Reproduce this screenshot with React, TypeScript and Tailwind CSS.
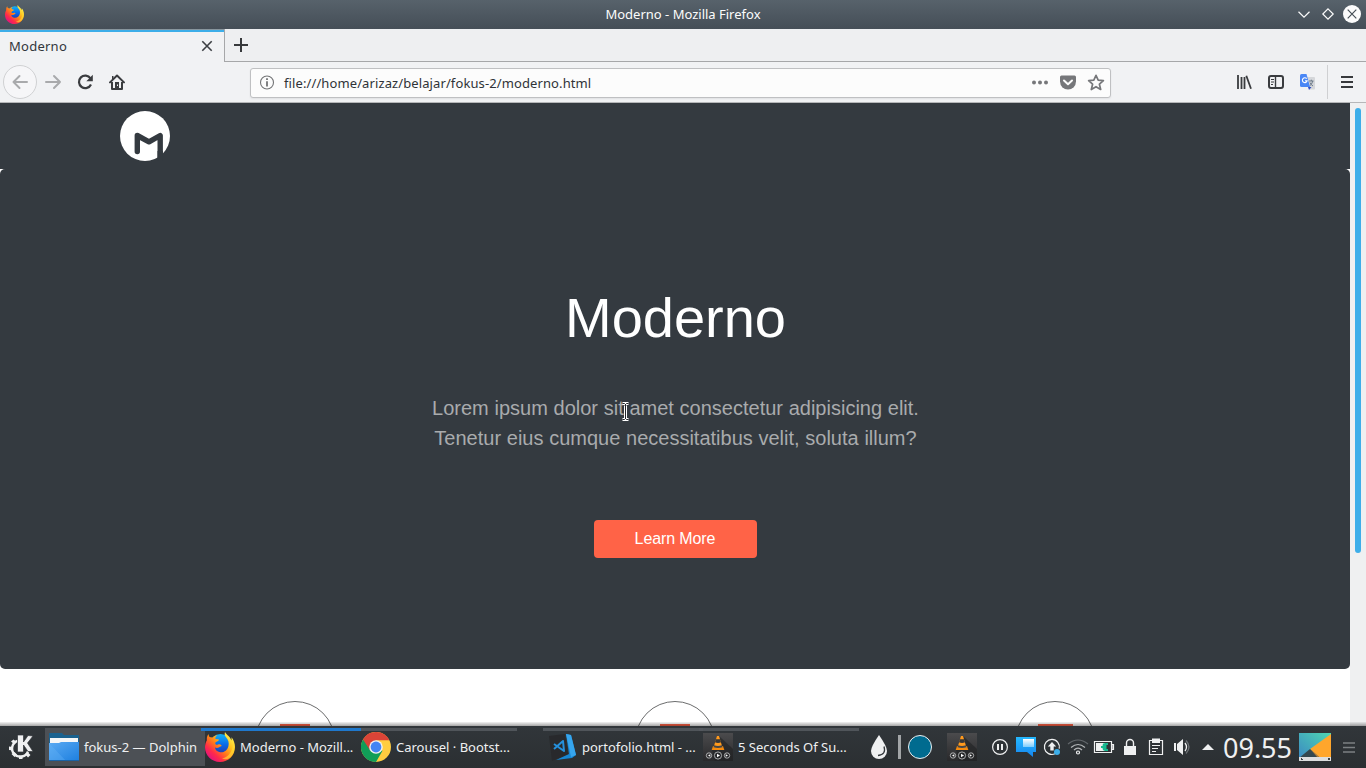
import React from "react";

const ui = "font-['Noto_Sans',sans-serif]";

function FirefoxLogo({ size, id }: { size: number; id: string }) {
  return (
    <svg width={size} height={size} viewBox="0 0 30 30" className="shrink-0">
      <defs>
        <linearGradient id={id + "a"} x1="0.85" y1="0.1" x2="0.15" y2="0.85">
          <stop offset="0" stopColor="#fff44f" />
          <stop offset="0.3" stopColor="#ffc01e" />
          <stop offset="0.55" stopColor="#ff7a1a" />
          <stop offset="0.8" stopColor="#ff2a4a" />
          <stop offset="1" stopColor="#e6157a" />
        </linearGradient>
        <linearGradient id={id + "b"} x1="0.5" y1="0" x2="0.5" y2="1">
          <stop offset="0" stopColor="#12b4f5" />
          <stop offset="0.5" stopColor="#0a6be8" />
          <stop offset="1" stopColor="#2431a8" />
        </linearGradient>
      </defs>
      <circle cx="15.500" cy="12.500" r="10.500" fill={"url(#" + id + "b)"} />
      <path
        d="M20 0c-.6 2-.4 3.600 1 5.300 2.300 2.400 3.300 5.600 2.400 8.900-1 4-4.400 6.500-8.200 6-3.300-.4-5.200-2.600-5.200-4.600 1.700.6 3.200.4 4.500-.7.8-.6 1.700-.3 2-.9.300-.6-.6-1.700-2.200-1.700-1.500 0-2 1-3.500.2-.6-.6-.6-1.300-.4-1.900.4-.7 2.900-1.600 3.200-2 .2-.4.200-.9.100-1.400-2 .1-3-.3-3.500-.8.300-1.500 1-2.400 2.100-3.200-2.200.2-3.800 1.200-4.800 2.300-1.200-.2-2.200-.2-3-.6C3.800 3.800 3.700 2.800 3.500 2 1.700 4.200 1.700 6.700 1.900 8.300.8 10.300 0 12.800 0 15.300 0 23.500 6.600 30 15 30s15-6.600 15-15c0-3.800-1.400-7.200-3.500-9.800.1 1.300.1 2.300-.1 3.200C25.400 4.800 22 3.400 20 0z"
        fill={"url(#" + id + "a)"}
      />
      <path d="M27.500 9c1.500 7-2 15.500-10.500 17.500C25 30 31 21 29 12z" fill="#ffdf36" opacity="0.6" />
    </svg>
  );
}

function VlcIcon({ id }: { id: string }) {
  return (
    <svg width="30" height="28" viewBox="0 0 30 28" className="shrink-0">
      <defs>
        <linearGradient id={id} x1="0" y1="0" x2="0" y2="1">
          <stop offset="0" stopColor="#4b4b4d" />
          <stop offset="1" stopColor="#29292b" />
        </linearGradient>
      </defs>
      <rect width="30" height="28" fill={"url(#" + id + ")"} />
      <path d="M16 3 30 16v12H12l-3-11z" fill="#202123" opacity="0.6" />
      <path d="M10 13h10l1.300 4H8.700z" fill="#f58a0d" />
      <path d="M14 3h2l3.500 11.500q-4.500 1.500-9 0z" fill="#ff9a1e" />
      <path d="M13 6.300h4l1 3q-3 1.200-6 0z" fill="#353638" />
      <path d="M11 12.200q4 1.600 8 0l.6 2q-4.600 1.500-9.200 0z" fill="#454546" />
      <g fill="none" stroke="#c9cacb" strokeWidth="0.8">
        <circle cx="6" cy="22.500" r="2.700" />
        <circle cx="15" cy="22.500" r="3.600" />
        <circle cx="24" cy="22.500" r="2.700" />
      </g>
      <path d="m14 20.700 3 1.800-3 1.800zM7.300 21.200v2.600L5 22.500zM22.700 21.200v2.600l2.300-1.300z" fill="#fff" />
    </svg>
  );
}

function WindowBar() {
  return (
    <div className="relative flex h-[29px] shrink-0 items-center justify-center bg-linear-to-b from-[#57626b] to-[#454e57]">
      <div className="absolute left-[5px] top-[5px]">
        <FirefoxLogo size={19} id="fxTitle" />
      </div>
      <span className="pb-[2px] text-[13px] leading-[18px] text-[#fcfcfc]">Moderno - Mozilla Firefox</span>
      <svg className="absolute right-0 top-0" width="72" height="29" viewBox="0 0 72 29" fill="none" stroke="#fcfcfc" strokeWidth="1.200">
        <path d="m4.500 11.800 5.500 5.400 5.500-5.400M34 8.800l5.200 5.200-5.200 5.200-5.200-5.200z" />
        <circle cx="58" cy="14" r="9" fill="#fcfcfc" stroke="none" />
        <path d="m53.700 9.700 8.600 8.600m0-8.600-8.600 8.600" stroke="#475057" />
      </svg>
    </div>
  );
}

function TabStrip() {
  return (
    <div className="flex h-[33px] shrink-0 bg-[#eeeff1]">
      <div className="flex h-[33px] w-[225px] items-center justify-between border-r border-[#a6a7a9] bg-[#f1f2f4] pl-[9px] pr-[11px] shadow-[inset_0_1px_0_#88959d,inset_0_3px_0_#3daee9]">
        <span className="pt-px text-[13px] leading-[18px] tracking-[0.25px] text-[#31363b]">Moderno</span>
        <svg width="12" height="12" viewBox="0 0 12 12" stroke="#3c3f43" strokeWidth="1.600" className="mt-px">
          <path d="m1.300 1.300 9.400 9.400m0-9.400-9.400 9.400" />
        </svg>
      </div>
      <div className="flex-1 border-b border-[#a6a7a9] pl-[8px] pt-[8px]">
        <svg width="16" height="16" viewBox="0 0 16 16" stroke="#37393c" strokeWidth="2">
          <path d="M8 1v14M1 8h14" />
        </svg>
      </div>
    </div>
  );
}

function Toolbar() {
  return (
    <div className="flex h-[41px] shrink-0 items-center border-b border-[#b6b7b9] bg-[#f1f2f4]">
      <svg width="250" height="40" viewBox="0 0 250 40" fill="none" className="shrink-0">
        <circle cx="20" cy="20" r="16.500" fill="#f6f6f8" stroke="#d0d1d3" />
        <g stroke="#a9aaac" strokeWidth="2" strokeLinecap="round" strokeLinejoin="round">
          <path d="M27 20H13.500m6-6-6 6 6 6" />
          <path d="M46 20h14m-6-6 6 6-6 6" />
        </g>
        <path d="M90.500 16.300A6.300 6.300 0 1 0 91 22.500" stroke="#3a3c3f" strokeWidth="2.200" />
        <path d="M92.800 12.800v6.400h-6.500z" fill="#3a3c3f" />
        <path d="m110 20.400 7-6.900 7 6.900" stroke="#3a3c3f" strokeWidth="2" strokeLinecap="round" strokeLinejoin="round" />
        <path d="M112 20v7h10v-7" stroke="#3a3c3f" strokeWidth="2" strokeLinejoin="round" />
        <path d="M115 20h4v7h-4z" fill="#3a3c3f" />
        <path d="M117 22.500h1v1.500h-1z" fill="#f1f2f4" />
        <path d="M112 14h1.500v3H112z" fill="#3a3c3f" />
      </svg>
      <div className="mt-px flex h-[30px] w-[861px] shrink-0 items-center rounded-[3px] border border-[#bfc0c2] bg-[#fcfcfc] shadow-[0_1px_2px_rgba(0,0,0,0.07)]">
        <svg width="33" height="28" viewBox="0 0 33 28" fill="none" className="shrink-0">
          <circle cx="16" cy="13.500" r="6.500" stroke="#737476" strokeWidth="1.100" />
          <path d="M16 12.200V17.500M16 9.300v1.800" stroke="#606163" strokeWidth="1.600" />
        </svg>
        <span className="flex-1 pt-[1px] text-[13px] leading-[18px] tracking-[0.105px] text-[#2f3337]">file:///home/arizaz/belajar/fokus-2/moderno.html</span>
        <svg width="80" height="28" viewBox="0 0 80 28" className="shrink-0" fill="#76777a">
          <circle cx="4" cy="13.500" r="2" />
          <circle cx="10" cy="13.500" r="2" />
          <circle cx="16" cy="13.500" r="2" />
          <path d="M25.500 0" />
          <path d="M31.500 6.500h13q1.500 0 1.500 1.500v4.500a8 8 0 0 1-16 0V8q0-1.500 1.500-1.500z" />
          <path d="m34 11.500 4 3.800 4-3.800" fill="none" stroke="#fcfcfc" strokeWidth="2" strokeLinecap="round" strokeLinejoin="round" />
          <path d="m66 6.300 2.200 4.900 5.200.5-4 3.500 1.300 5.300-4.700-2.800-4.700 2.800 1.300-5.300-4-3.500 5.200-.5z" fill="none" stroke="#76777a" strokeWidth="1.700" strokeLinejoin="round" />
        </svg>
      </div>
      <svg width="255" height="40" viewBox="1111 62 255 40" fill="none" className="shrink-0">
        <g stroke="#3a3c3f" strokeWidth="2">
          <path d="M1238 75v14M1241.500 77v12M1244.500 77v12M1246.300 75.700l4.700 13" strokeWidth="1.800" />
          <rect x="1269" y="76" width="14" height="12" rx="2" />
          <path d="M1275.500 76v12" strokeWidth="1.400" />
          <path d="M1271 79.500h3M1271 82h3M1271 84.500h2" strokeWidth="1" />
        </g>
        <path d="M1306 77h8q1 0 1 1v10.500q0 1-1 1h-5z" fill="#d5d7da" />
        <path d="M1301.500 74h5l3.500 13h-8.500q-1.500 0-1.500-1.500v-10q0-1.500 1.500-1.500z" fill="#4a87f5" />
        <path d="M1308 87h3.500l-2.500 3z" fill="#2f50c8" />
        <path d="M1306.700 78.700a2.400 2.400 0 1 0 .4 2.200h-2" stroke="#fff" strokeWidth="1.100" />
        <path d="M1309 81h4.500M1311.300 79.700v1.300M1312.800 81q-1 3.600-3 4.700M1310 82.500q1 2.500 3 3.500" stroke="#6c7a89" />
        <path d="M1327.500 65v34" stroke="#cfd0d2" />
        <path d="M1341 77h12M1341 82h12M1341 87h12" stroke="#37393c" strokeWidth="2" />
      </svg>
    </div>
  );
}

function PageHeader() {
  return (
    <header className="h-[66px] bg-[#343a40] pl-[120px] pt-[8px]">
      <svg width="50" height="50" viewBox="0 0 50 50">
        <circle cx="25" cy="25" r="25" fill="#fff" />
        <path d="M17.300 40.500V24.500L29 30.800l11.200-6.300V48" fill="none" stroke="#343a40" strokeWidth="5.400" strokeLinecap="round" strokeLinejoin="round" />
        <path d="M37.500 40h5.400v8h-5.400z" fill="#343a40" />
      </svg>
    </header>
  );
}

function Hero() {
  return (
    <section className="relative flex h-[500px] flex-col items-center rounded-[5px] bg-[#343a40] pt-[115px]">
      <h1 className="pl-[1px] text-[56px] leading-[67px] text-white">Moderno</h1>
      <p className="mt-[42px] pl-[1px] text-center text-[20px] leading-[30px] text-[#a9abad] [word-spacing:0.15px]">
        Lorem ipsum dolor sit amet consectetur adipisicing elit.
        <br />
        Tenetur eius cumque necessitatibus velit, soluta illum?
      </p>
      <button className="mt-[67px] h-[38px] w-[163px] rounded-[4px] bg-[#ff6347] text-[16px] leading-[24px] tracking-[-0.1px] text-white">Learn More</button>
      <svg className="absolute left-[620px] top-[232px]" width="12" height="21" viewBox="0 0 12 21" fill="none">
        <path d="M2.500 2.500h2l1 1 1-1h2M5.500 3v15M2.500 18.500h2l1-1 1 1h2" stroke="#fff" strokeWidth="3" />
        <path d="M2.500 2.500h2l1 1 1-1h2M5.500 3v15M2.500 18.500h2l1-1 1 1h2" stroke="#222528" strokeWidth="1" />
      </svg>
    </section>
  );
}

function Features() {
  return (
    <section className="flex h-[57px] justify-center gap-[300px] overflow-hidden pt-[32px]">
      {["w-[30px]", "w-[30px]", "w-[35px]"].map((width, i) => (
        <div key={i} className="flex h-[80px] w-[80px] shrink-0 justify-center rounded-full border border-[#6c6d6e] pt-[22px]">
          <div className={width + " h-[20px] bg-[#ff6347]"} />
        </div>
      ))}
    </section>
  );
}

function Task({ title, icon, state = "idle" }: { title: string; icon: React.ReactNode; state?: "idle" | "active" | "hover" }) {
  const look = state === "hover" ? "bg-[#4c5055]" : state === "active" ? "z-10 border-t-[3px] border-[#1f78cc]" : "border-t-[3px] border-[#54595e]/90";
  return (
    <div className={"relative h-[38px] w-[160px] shrink-0 " + look}>
      <div className={"flex items-center gap-[5px] pl-[4px] " + (state === "hover" ? "h-[38px]" : "-mt-[2px] h-[35px]")}>
        <div className="flex w-[30px] shrink-0 justify-center">{icon}</div>
        <span className="whitespace-nowrap text-[13px] leading-[18px] text-[#eff0f1]">{title}</span>
      </div>
    </div>
  );
}

function FolderIcon() {
  return (
    <svg width="30" height="28" viewBox="0 0 30 28">
      <defs>
        <linearGradient id="folder" x1="0" y1="0" x2="1" y2="1">
          <stop offset="0" stopColor="#5aaaf3" />
          <stop offset="1" stopColor="#1d7fdf" />
        </linearGradient>
      </defs>
      <path d="M0 0h13l2 2h15v8H0z" fill="#1b628f" />
      <path d="M1 5h28v6H1z" fill="#f5f6f7" />
      <path d="M0 10h10l2-1h18v19H0z" fill="url(#folder)" />
      <path d="m0 10 17 18H0z" fill="#67b4f6" opacity="0.35" />
      <path d="M0 27h30v1H0z" fill="#1a62a4" />
    </svg>
  );
}

function ChromeIcon() {
  return (
    <svg width="30" height="30" viewBox="0 0 30 30">
      <circle cx="15" cy="15" r="15" fill="#ffcd40" />
      <path d="M15 15 2 7.500A15 15 0 0 0 15 30l6.500-11.300z" fill="#119e58" />
      <path d="M2 7.500A15 15 0 0 1 28.300 8.200H15l-6.300 9.500z" fill="#db4437" />
      <circle cx="15" cy="15" r="6.800" fill="#f1f1f1" />
      <circle cx="15" cy="15" r="5.400" fill="#4285f4" />
    </svg>
  );
}

function CodeIcon() {
  return (
    <svg width="30" height="30" viewBox="0 0 30 30">
      <path d="m19 2 5 1 5 20-4 3-16 2 13-6z" fill="#1687d5" />
      <path d="m19 2 5 1 5 20-5 2z" fill="#36a5ed" />
      <path d="M2 4 18 2l3 20-16 7z" fill="#28292c" />
      <path d="m7 17 9-8 1 10-10-7" fill="none" stroke="#2590dc" strokeWidth="2" strokeLinejoin="round" />
    </svg>
  );
}

function Tray() {
  return (
    <svg width="232" height="42" viewBox="987 726 232 42" fill="none" stroke="#eff0f1" className="shrink-0">
      <defs>
        <linearGradient id="chat" x1="0" y1="0" x2="0" y2="1">
          <stop offset="0" stopColor="#25b9ff" />
          <stop offset="1" stopColor="#1685ee" />
        </linearGradient>
        <linearGradient id="chatInner" x1="0" y1="0" x2="0" y2="1">
          <stop offset="0" stopColor="#fff" />
          <stop offset="1" stopColor="#7ccdfc" />
        </linearGradient>
      </defs>
      <circle cx="1000" cy="747" r="7.400" strokeWidth="1.200" />
      <path d="M998 744v6M1002 744v6" strokeWidth="2" />
      <g stroke="none">
        <path d="M1016 737h20v15h-3v5l-6-5h-11z" fill="url(#chat)" />
        <path d="M1023 739h11v8h-11z" fill="url(#chatInner)" />
      </g>
      <path d="M1055 753.800a7.500 7.500 0 1 1 4.200-5.100" strokeWidth="1.200" />
      <path d="m1052 742 4.200 4.500h-2.500v4h-3.400v-4h-2.500z" fill="#eff0f1" stroke="none" />
      <circle cx="1057" cy="752" r="3" fill="#3daee9" stroke="none" />
      <path d="M1068 744q10-8 20 0" stroke="#63686c" strokeWidth="1.200" />
      <path d="M1071 747.500q7-6 14 0M1074 750q4-3.600 8 0" strokeWidth="1.200" stroke="#b4b7b9" />
      <circle cx="1078" cy="752.500" r="1.500" strokeWidth="1.200" />
      <path d="M1094.500 741.500h17v11h-17zM1112 744.500h1.500v5h-1.500z" strokeWidth="1.200" />
      <path d="M1096 743h9v8h-9z" fill="#eff0f1" stroke="none" />
      <path d="M1101 747h2m5-3h-2.500q-2 0-2 1.500v3q0 1.500 2 1.500h2.500" stroke="#16b990" strokeWidth="1.800" />
      <path d="M1103.500 744.500h3v5h-3z" fill="#16b990" stroke="none" />
      <path d="M1124 746h12v9h-12z" fill="#eff0f1" stroke="none" />
      <path d="M1126.500 746v-3a3.500 3.500 0 0 1 7 0v3" strokeWidth="1.400" />
      <path d="M1149.500 740.500h13v14h-13z" strokeWidth="1.200" />
      <path d="M1152 738.500h8v4.500h-8z" fill="#eff0f1" stroke="none" />
      <path d="M1152 745.500h8M1152 748.500h6M1152 751.500h4" />
      <path d="M1174 743h2v8h-2zM1177 744l6-5v16l-6-5z" fill="#eff0f1" stroke="none" />
      <path d="M1185 743q3 4 0 8" strokeWidth="1.300" />
      <path d="M1186 740.500q6 6.500 0 13" stroke="#6c7175" strokeWidth="1.300" />
      <path d="m1202 750 6-6 6 6z" fill="#eff0f1" stroke="none" />
    </svg>
  );
}

function Taskbar() {
  return (
    <footer className="flex h-[42px] shrink-0 items-center bg-linear-to-b from-[#31363a] to-[#2b2f32]">
      <svg width="45" height="42" viewBox="0 0 45 42" className="shrink-0" fill="#eff0f1">
        <path d="M17.500 14.800a8.200 8.200 0 1 0 10.500 10.500" fill="none" stroke="#eff0f1" strokeWidth="2.400" />
        <path d="m9 20.500 4 .5v3.500l-4-.5zM11.500 28l3-2 2.500 2.500-2.500 2.500zM19 29.500h3.500V33H19zM25 28l2.500-2 3 3-2.500 2.500zM11 15.500l2.500-2 3 2.500-2 2.500z" />
        <path d="M17.500 9h6v7l4.500-6.500 5 .5-5.500 7 5.500 8.500h-5l-4.500-6.500v7h-6z" stroke="#303539" strokeWidth="0.700" />
      </svg>
      <Task title="fokus-2 — Dolphin" icon={<FolderIcon />} state="hover" />
      <div className="-ml-[4px] shrink-0">
        <Task title="Moderno - Mozill..." icon={<FirefoxLogo size={30} id="fxTask" />} state="active" />
      </div>
      <div className="-ml-[4px] shrink-0">
        <Task title="Carousel · Bootst..." icon={<ChromeIcon />} />
      </div>
      <div className="ml-[26px] shrink-0">
        <Task title="portofolio.html - ..." icon={<CodeIcon />} />
      </div>
      <div className="-ml-[4px] shrink-0">
        <Task title="5 Seconds Of Su..." icon={<VlcIcon id="vlcTask" />} />
      </div>
      <svg width="88" height="42" viewBox="859 726 88 42" className="shrink-0">
        <path d="M879 735q8 11.500 8 16a8 8 0 0 1-16 0q0-4.500 8-16z" fill="#eff0f1" />
        <path d="M884 746.500q2.500 8-6 9" fill="none" stroke="#31363a" strokeWidth="1.300" />
        <path d="M898 735h3v24h-3z" fill="#a2a5a7" />
        <circle cx="920" cy="747" r="11.500" fill="#006b8f" stroke="#eff0f1" />
      </svg>
      <VlcIcon id="vlcTray" />
      <div className="ml-[10px] flex shrink-0">
        <Tray />
      </div>
      <span className="w-[80px] shrink-0 whitespace-nowrap pl-[4px] pt-[2px] text-[27px] leading-[40px] text-[#eff0f1]">09.55</span>
      <svg width="67" height="42" viewBox="1299 726 67 42" className="shrink-0">
        <defs>
          <linearGradient id="desktop" x1="0" y1="1" x2="1" y2="0">
            <stop offset="0" stopColor="#3b86c3" />
            <stop offset="1" stopColor="#4ed7b3" />
          </linearGradient>
        </defs>
        <path d="M1299 733h32v28h-32z" fill="url(#desktop)" />
        <path d="m1331 734-21 15 10 9h11z" fill="#ffa62c" />
        <path d="m1310 749-11 9h21z" fill="#34484f" />
        <path d="m1310 749 8 9h2z" fill="#b97a32" />
        <path d="M1299 757h32v4h-32z" fill="#dddedf" />
        <path d="M1301 758h1v1h1v1h-2zM1328 758h2v2h-2z" fill="#3b4247" />
        <path d="M1343 743h12M1343 747.500h12M1343 752h12" stroke="#7c8083" strokeWidth="1.700" />
      </svg>
    </footer>
  );
}

export default function App() {
  return (
    <div className={"flex h-[768px] w-[1366px] flex-col overflow-hidden bg-white " + ui}>
      <WindowBar />
      <TabStrip />
      <Toolbar />
      <div className="relative flex h-[623px] shrink-0 overflow-hidden">
        <main className="w-[1350px] overflow-hidden bg-white font-['Liberation_Sans',sans-serif]">
          <PageHeader />
          <Hero />
          <Features />
        </main>
        <aside className="w-[16px] bg-[#eff0f1] pl-[5px] pt-[5px]">
          <div className="h-[445px] w-[6px] rounded-full bg-[#3daee9]" />
        </aside>
        <div className="absolute inset-x-0 bottom-0 h-[4px] bg-linear-to-b from-black/5 to-black/35" />
      </div>
      <Taskbar />
    </div>
  );
}
